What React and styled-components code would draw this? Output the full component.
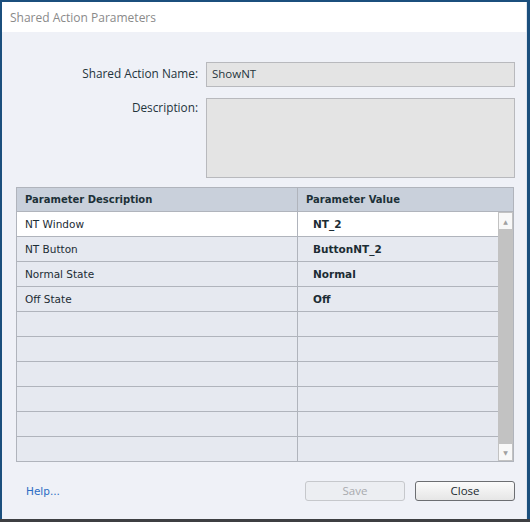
import React from "react";
import styled, { createGlobalStyle } from "styled-components";

const Global = createGlobalStyle`
  html, body { margin: 0; padding: 0; }
  body {
    width: 530px; height: 522px; overflow: hidden;
    background: linear-gradient(to bottom, #1b4f7d 0, #1b4f7d 519px, #3d3f42 519px);
    font-family: "Open Sans", "Noto Sans", sans-serif;
  }
`;

const Dialog = styled.div`
  box-sizing: border-box;
  margin: 2px 0 0 2px;
  width: 525px;
  height: 517px;
  background: #eff1f7;
  border-right: 1px solid #dfe5ee;
  display: flex;
  flex-direction: column;
`;

const TitleBar = styled.div`
  height: 30px;
  background: #ffffff;
  display: flex;
  align-items: center;
  padding-left: 8px;
  font-size: 12px;
  color: #8a8a8a;
`;

const Body = styled.div`
  flex: 1;
  display: flex;
  flex-direction: column;
  padding: 30px 11px 0 14px;
`;

const FieldRow = styled.div`
  display: grid;
  grid-template-columns: 190px 1fr;
  column-gap: 0;
  margin-bottom: ${(p) => p.$mb || 0}px;
`;

const Label = styled.div`
  text-align: right;
  padding-right: 8px;
  font-size: 11.8px;
  color: #24343c;
  line-height: 16px;
  padding-top: ${(p) => p.$pt || 0}px;
`;

const Input = styled.div`
  box-sizing: border-box;
  height: ${(p) => p.$h}px;
  background: #e4e4e4;
  border: 1px solid #b8b9bd;
  font-size: 11.5px;
  color: #24343c;
  padding: 4px 5px;
  line-height: 14px;
`;

const Table = styled.div`
  box-sizing: border-box;
  width: 498px;
  border: 1px solid #b0b4bc;
  display: flex;
  flex-direction: column;
  font-family: "DejaVu Sans", Verdana, sans-serif;
  font-size: 10.5px;
  color: #1c2c34;
`;

const HeaderRow = styled.div`
  display: grid;
  grid-template-columns: 280px 1fr;
  height: 23px;
  background: #c9d0db;
  border-bottom: 1px solid #b0b4bc;
`;

const HeaderCell = styled.div`
  display: flex;
  align-items: center;
  padding-left: 8px;
  font-weight: bold;
  font-size: 10px;
  color: #1c3038;
  border-left: ${(p) => (p.$divider ? "1px solid #b0b4bc" : "none")};
`;

const BodyArea = styled.div`
  display: flex;
`;

const Rows = styled.div`
  flex: 1;
  display: flex;
  flex-direction: column;
`;

const Row = styled.div`
  display: grid;
  grid-template-columns: 280px 1fr;
  height: 24px;
  background: ${(p) => (p.$selected ? "#ffffff" : "#e6e9f0")};
  border-bottom: ${(p) => (p.$last ? "none" : "1px solid #b0b4bc")};
`;

const Cell = styled.div`
  display: flex;
  align-items: center;
  padding-left: ${(p) => (p.$value ? 15 : 8)}px;
  font-weight: ${(p) => (p.$value ? "bold" : "normal")};
  border-left: ${(p) => (p.$value ? "1px solid #b0b4bc" : "none")};
`;

const Scrollbar = styled.div`
  width: 15px;
  background: #c2c2c2;
  display: flex;
  flex-direction: column;
  justify-content: space-between;
`;

const ScrollButton = styled.div`
  height: 16px;
  margin: 1px 1px;
  background: #f8f8f8;
  display: flex;
  align-items: center;
  justify-content: center;
  color: #a0a0a0;
  font-size: 6px;
`;

const Footer = styled.div`
  display: flex;
  align-items: center;
  padding: 19px 0 0 10px;
`;

const HelpLink = styled.a`
  font-family: "DejaVu Sans", Verdana, sans-serif;
  font-size: 10.5px;
  color: #2a6cc4;
  text-decoration: none;
  cursor: pointer;
`;

const Spacer = styled.div`
  flex: 1;
`;

const Button = styled.button`
  box-sizing: border-box;
  width: 100px;
  height: 20px;
  margin-left: ${(p) => p.$ml || 0}px;
  border-radius: 3px;
  font-family: "Open Sans", "Noto Sans", sans-serif;
  font-size: 11.5px;
  padding: 0;
  line-height: 16px;
  border: 1px solid ${(p) => (p.disabled ? "#c6c8cc" : "#6c6e72")};
  color: ${(p) => (p.disabled ? "#a8aaae" : "#1c2a30")};
  background: ${(p) =>
    p.disabled ? "#eceef2" : "linear-gradient(#fbfbfb, #e6e6e6)"};
`;

const rows = [
  ["NT Window", "NT_2"],
  ["NT Button", "ButtonNT_2"],
  ["Normal State", "Normal"],
  ["Off State", "Off"],
  ["", ""],
  ["", ""],
  ["", ""],
  ["", ""],
  ["", ""],
  ["", ""],
];

export default function App() {
  return (
    <>
      <Global />
      <Dialog>
        <TitleBar>Shared Action Parameters</TitleBar>
        <Body>
          <FieldRow $mb={11}>
            <Label $pt={3}>Shared Action Name:</Label>
            <Input $h={25}>ShowNT</Input>
          </FieldRow>
          <FieldRow $mb={9}>
            <Label $pt={1}>Description:</Label>
            <Input $h={80} />
          </FieldRow>
          <Table>
            <HeaderRow>
              <HeaderCell>Parameter Description</HeaderCell>
              <HeaderCell $divider>Parameter Value</HeaderCell>
            </HeaderRow>
            <BodyArea>
              <Rows>
                {rows.map(([d, v], i) => (
                  <Row key={i} $selected={i === 0} $last={i === rows.length - 1}>
                    <Cell>{d}</Cell>
                    <Cell $value>{v}</Cell>
                  </Row>
                ))}
              </Rows>
              <Scrollbar>
                <ScrollButton>▲</ScrollButton>
                <ScrollButton>▼</ScrollButton>
              </Scrollbar>
            </BodyArea>
          </Table>
          <Footer>
            <HelpLink>Help...</HelpLink>
            <Spacer />
            <Button disabled>Save</Button>
            <Button $ml={10}>Close</Button>
          </Footer>
        </Body>
      </Dialog>
    </>
  );
}
